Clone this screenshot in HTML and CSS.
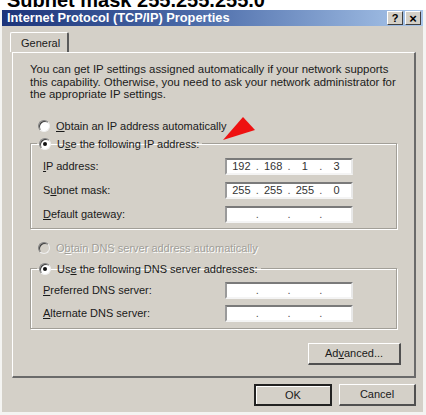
FILE: index.html
```html
<!DOCTYPE html>
<html>
<head>
<meta charset="utf-8">
<link rel="stylesheet" href="styles.css">
</head>
<body>
<div class="cut"><div class="cut-text">Subnet mask 255.255.255.0</div></div>
<div class="dialog">
  <div class="titlebar">
    <span class="title">Internet Protocol (TCP/IP) Properties</span>
    <div class="tb-buttons"><span class="tb-btn help">?</span><span class="tb-btn close">×</span></div>
  </div>
  <div class="client">
    <div class="tabs"><div class="tab">General</div></div>
    <div class="panel">
      <p class="intro">You can get IP settings assigned automatically if your network supports<br>this capability. Otherwise, you need to ask your network administrator for<br>the appropriate IP settings.</p>
      <div class="radio-row"><span class="radio"></span><span><u>O</u>btain an IP address automatically</span></div>
      <fieldset class="group">
        <legend><span class="radio checked"></span><span>U<u>s</u>e the following IP address:</span></legend>
        <div class="grid">
          <label><u>I</u>P address:</label>
          <div class="ip"><span class="seg">192</span><span class="dot">.</span><span class="seg">168</span><span class="dot">.</span><span class="seg">1</span><span class="dot">.</span><span class="seg">3</span></div>
          <label>S<u>u</u>bnet mask:</label>
          <div class="ip"><span class="seg">255</span><span class="dot">.</span><span class="seg">255</span><span class="dot">.</span><span class="seg">255</span><span class="dot">.</span><span class="seg">0</span></div>
          <label><u>D</u>efault gateway:</label>
          <div class="ip"><span class="seg"></span><span class="dot">.</span><span class="seg"></span><span class="dot">.</span><span class="seg"></span><span class="dot">.</span><span class="seg"></span></div>
        </div>
      </fieldset>
      <div class="radio-row disabled"><span class="radio"></span><span>O<u>b</u>tain DNS server address automatically</span></div>
      <fieldset class="group dns">
        <legend><span class="radio checked"></span><span>Us<u>e</u> the following DNS server addresses:</span></legend>
        <div class="grid">
          <label><u>P</u>referred DNS server:</label>
          <div class="ip"><span class="seg"></span><span class="dot">.</span><span class="seg"></span><span class="dot">.</span><span class="seg"></span><span class="dot">.</span><span class="seg"></span></div>
          <label><u>A</u>lternate DNS server:</label>
          <div class="ip"><span class="seg"></span><span class="dot">.</span><span class="seg"></span><span class="dot">.</span><span class="seg"></span><span class="dot">.</span><span class="seg"></span></div>
        </div>
      </fieldset>
      <div class="adv-row"><button class="btn adv">Ad<u>v</u>anced...</button></div>
    </div>
    <div class="actions"><button class="btn default">OK</button><button class="btn">Cancel</button></div>
  </div>
</div>
<svg class="arrow" width="36" height="28" viewBox="0 0 36 28"><polygon points="22,3 34,16 2,26" fill="#ee1111"/></svg>
</body>
</html>
```
FILE: styles.css
```css
html, body { margin: 0; padding: 0; }
body {
  position: relative;
  width: 426px;
  height: 415px;
  overflow: hidden;
  background: #f4f4f2;
  font-family: "Liberation Sans", Arial, sans-serif;
  font-size: 11px;
  color: #1a1a1a;
}
.cut { height: 10px; overflow: hidden; background: #fff; }
.cut-text {
  margin-top: -10px;
  padding-left: 7px;
  font-size: 20px;
  line-height: 20px;
  font-weight: bold;
  color: #000;
  white-space: nowrap;
}
.dialog {
  margin: 0 3px 0 2px;
  background: #d4d0c8;
  padding-bottom: 6px;
}
.titlebar {
  height: 16px;
  display: flex;
  align-items: center;
  justify-content: space-between;
  background: linear-gradient(to right, #1c347a 0%, #4a6aa8 45%, #a9c6ea 100%);
  padding: 0 2px 0 5px;
}
.title {
  color: #fff;
  font-weight: bold;
  font-size: 12.8px;
  line-height: 14px;
  margin-top: -1px;
  white-space: nowrap;
}
.tb-buttons { display: flex; gap: 2px; }
.tb-btn {
  width: 14px;
  height: 12px;
  background: #d4d0c8;
  border-top: 1px solid #fff;
  border-left: 1px solid #fff;
  border-right: 1px solid #404040;
  border-bottom: 1px solid #404040;
  display: flex;
  align-items: center;
  justify-content: center;
  font-weight: bold;
  font-size: 11px;
  line-height: 1;
  color: #000;
}
.tb-btn.close { font-size: 13px; }
.client { padding: 6px 7px 0 10px; }
.tabs { display: flex; height: 20px; }
.tab {
  position: relative;
  z-index: 1;
  margin-left: -2px;
  margin-bottom: -1px;
  width: 59px;
  height: 20px;
  box-sizing: border-box;
  padding-left: 10px;
  line-height: 20px;
  background: #d4d0c8;
  border-top: 1px solid #fff;
  border-left: 1px solid #fff;
  border-right: 2px solid #5a5a5a;
  border-radius: 2px 2px 0 0;
}
.panel {
  border-top: 1px solid #fff;
  border-left: 1px solid #fff;
  border-right: 2px solid #6a6a6a;
  border-bottom: 2px solid #6a6a6a;
  padding: 10px 17px 11px 17px;
}
.intro { margin: 0 -14px 0 0; line-height: 12.5px; font-size: 11.4px; white-space: nowrap; }
.radio-row {
  display: flex;
  align-items: center;
  gap: 6px;
  height: 14px;
  margin-top: 18px;
  padding-left: 8px;
}
.radio {
  width: 10px;
  height: 10px;
  border-radius: 50%;
  background: #fff;
  border: 1px solid;
  border-color: #808080 #f0f0f0 #f0f0f0 #808080;
  box-shadow: inset 1px 1px 0 #404040;
  display: inline-flex;
  align-items: center;
  justify-content: center;
  flex: none;
}
.radio.checked::after {
  content: "";
  width: 4px;
  height: 4px;
  border-radius: 50%;
  background: #111;
}
.disabled { color: #a09e98; text-shadow: 1px 1px 0 #fff; margin-top: 12px; }
.disabled .radio { background: #d4d0c8; }
.group {
  margin: 4px 0 0 0;
  padding: 0 0 5px 12px;
  border: 1px solid #a29f98;
  box-shadow: 1px 1px 0 #fff, inset 1px 1px 0 #fff;
  min-width: 0;
}
.group legend {
  margin-left: -6px;
  padding: 0 3px 0 2px;
  height: 14px;
  display: flex;
  align-items: center;
  gap: 6px;
}
.group.dns { margin-top: 7px; padding-bottom: 6px; }
.grid {
  display: grid;
  grid-template-columns: 182px 128px;
  row-gap: 7px;
  align-items: center;
  margin-top: 7px;
}
.dns .grid { margin-top: 6px; row-gap: 6px; }
.ip {
  height: 17px;
  box-sizing: border-box;
  background: #fff;
  border-top: 2px solid #7a7a7a;
  border-left: 2px solid #9a9a9a;
  border-right: 2px solid #e8e8e8;
  border-bottom: 2px solid #f4f4f4;
  display: flex;
  align-items: center;
  color: #333;
}
.seg { flex: 1; text-align: center; }
.dot { width: 3px; text-align: center; color: #555; }
.adv-row { display: flex; justify-content: flex-end; margin: 14px -4px 0 0; }
.btn {
  font-family: "Liberation Sans", Arial, sans-serif;
  font-size: 11px;
  color: #1a1a1a;
  background: #d4d0c8;
  height: 22px;
  box-sizing: border-box;
  padding: 0;
  border-top: 1px solid #fff;
  border-left: 1px solid #fff;
  border-right: 2px solid #505050;
  border-bottom: 2px solid #505050;
}
.adv { width: 93px; }
.actions { display: flex; justify-content: flex-end; gap: 7px; margin-top: 6px; }
.actions .btn { width: 77px; }
.actions .default { width: 78px; border: 2px solid #222; box-shadow: inset 1px 1px 0 #fff; }
.arrow { position: absolute; left: 221px; top: 114px; }
```
